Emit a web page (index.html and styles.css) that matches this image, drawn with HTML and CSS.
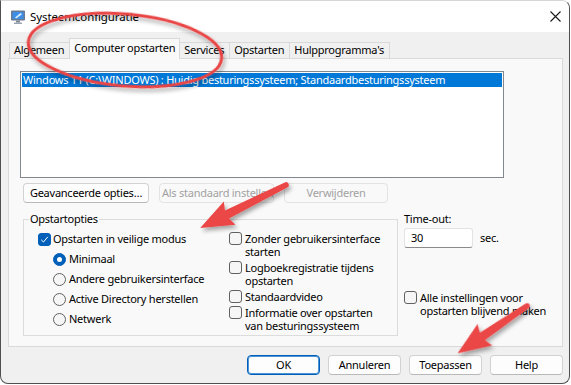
FILE: index.html
```html
<!DOCTYPE html>
<html lang="nl">
<head>
    <meta charset="UTF-8">
    <title>Systeemconfiguratie</title>
    <link rel="stylesheet" href="styles.css">
</head>
<body>
    <div class="window">
        <div class="titlebar">
            <svg class="app-icon" width="16" height="16" viewBox="0 0 16 16">
                <rect x="1" y="1.5" width="14" height="10" rx="1" fill="#6b7a90"/>
                <rect x="2.5" y="3" width="11" height="7" fill="#3d8ee6"/>
                <path d="M5 8.5 L10.5 4 L12 5.2 L6.2 9.5Z" fill="#d9ecff"/>
                <rect x="6" y="11.5" width="4" height="2" fill="#7d8898"/>
                <rect x="4" y="13.5" width="8" height="1.5" rx="0.5" fill="#9aa3b0"/>
            </svg>
            <span class="title">Systeemconfiguratie</span>
            <svg class="close" width="11" height="11" viewBox="0 0 11 11">
                <path d="M0.5 0.5 L10.5 10.5 M10.5 0.5 L0.5 10.5" stroke="#1a1a1a" stroke-width="1.1"/>
            </svg>
        </div>

        <div class="client">
            <div class="tabs">
                <div class="tab">Algemeen</div>
                <div class="tab active">Computer opstarten</div>
                <div class="tab">Services</div>
                <div class="tab">Opstarten</div>
                <div class="tab">Hulpprogramma's</div>
            </div>

            <div class="panel">
                <div class="listbox">
                    <div class="item selected">Windows 11 (C:\WINDOWS) : Huidig besturingssysteem; Standaardbesturingssysteem</div>
                </div>

                <div class="btn-row">
                    <button class="btn btn-adv">Geavanceerde opties…</button>
                    <button class="btn btn-default" disabled>Als standaard instellen</button>
                    <button class="btn btn-remove" disabled>Verwijderen</button>
                </div>

                <div class="options">
                    <fieldset class="group">
                        <legend>Opstartopties</legend>
                        <div class="group-body">
                            <div class="col-left">
                                <div class="row"><span class="check on"><svg width="9" height="9" viewBox="0 0 9 9"><path d="M1.2 4.8 L3.5 7 L7.8 1.8" fill="none" stroke="#fff" stroke-width="1"/></svg></span>Opstarten in veilige modus</div>
                                <div class="row sub"><span class="radio on"></span>Minimaal</div>
                                <div class="row sub"><span class="radio"></span>Andere gebruikersinterface</div>
                                <div class="row sub"><span class="radio"></span>Active Directory herstellen</div>
                                <div class="row sub"><span class="radio"></span>Netwerk</div>
                            </div>
                            <div class="col-right">
                                <div class="opt"><span class="check"></span><span class="opt-text">Zonder gebruikersinterface starten</span></div>
                                <div class="opt"><span class="check"></span><span class="opt-text">Logboekregistratie tijdens opstarten</span></div>
                                <div class="opt"><span class="check"></span><span class="opt-text">Standaardvideo</span></div>
                                <div class="opt"><span class="check"></span><span class="opt-text">Informatie over opstarten van besturingssysteem</span></div>
                            </div>
                        </div>
                    </fieldset>

                    <div class="timeout">
                        <div class="label">Time-out:</div>
                        <div class="timeout-row">
                            <div class="input">30</div>
                            <span class="unit">sec.</span>
                        </div>
                        <div class="opt persist"><span class="check"></span><span class="opt-text">Alle instellingen voor opstarten blijvend maken</span></div>
                    </div>
                </div>
            </div>

            <div class="footer">
                <button class="btn btn-foot primary">OK</button>
                <button class="btn btn-foot">Annuleren</button>
                <button class="btn btn-foot">Toepassen</button>
                <button class="btn btn-foot">Help</button>
            </div>
        </div>

        <!-- markup annotations drawn over the dialog -->
        <svg class="marks" width="571" height="385" viewBox="0 0 571 385">
            <defs>
                <filter id="shadow" x="-20%" y="-20%" width="140%" height="140%">
                    <feDropShadow dx="2" dy="3" stdDeviation="2" flood-color="#000" flood-opacity="0.35"/>
                </filter>
            </defs>
            <ellipse cx="125" cy="50" rx="97" ry="36" transform="rotate(5 125 50)" fill="none" stroke="#e94444" stroke-width="3" filter="url(#shadow)"/>
            <g filter="url(#shadow)">
                <g transform="translate(286 185) rotate(153.4)">
                    <path d="M0,-2.8 L66,-4.5 L63,-13 L96,0 L63,13 L66,4.5 L0,2.8 A2.8,2.8 0 0 1 0,-2.8Z" fill="#eb4646"/>
                </g>
                <g transform="translate(527 306) rotate(145.7)">
                    <path d="M0,-2.8 L54,-4.5 L51,-13 L84,0 L51,13 L54,4.5 L0,2.8 A2.8,2.8 0 0 1 0,-2.8Z" fill="#eb4646"/>
                </g>
            </g>
        </svg>
    </div>
</body>
</html>
```

FILE: styles.css
```css
* {
    margin: 0;
    padding: 0;
    box-sizing: border-box;
}

body {
    font-family: "Noto Sans", sans-serif;
    font-size: 11px;
    letter-spacing: -0.25px;
    line-height: 14px;
    color: #000;
    background: #fff;
}

.window {
    position: relative;
    width: 570px;
    height: 384px;
    border: 1px solid #4f4f4f;
    border-top-color: #d6d6d6;
    border-radius: 0 8px 8px 8px;
    overflow: hidden;
    background: #f0f0f0;
    display: flex;
    flex-direction: column;
}

/* title bar */
.titlebar {
    height: 31px;
    background: #fff;
    display: flex;
    align-items: center;
    padding-left: 9px;
}

.title {
    margin-left: 4px;
    font-size: 11.5px;
    letter-spacing: -0.1px;
}

.close {
    margin-left: auto;
    margin-right: 8px;
}

/* client area */
.client {
    flex: 1;
    padding: 6px 6px 0 7px;
}

.tabs {
    display: flex;
    align-items: flex-end;
    height: 20px;
    padding-left: 1px;
}

.tab {
    height: 16px;
    padding: 0 5px 0 4px;
    border: 1px solid #d9d9d9;
    border-bottom: none;
    background: #f0f0f0;
    line-height: 14px;
    white-space: nowrap;
}

.tab + .tab {
    margin-left: -1px;
}

.tab.active {
    position: relative;
    z-index: 1;
    height: 21px;
    margin-bottom: -1px;
    padding: 0 4px;
    background: #f9f9f9;
    line-height: 18px;
}

.panel {
    height: 289px;
    border: 1px solid #d9d9d9;
    background: #f9f9f9;
    padding: 12px 0 0 11px;
}

.listbox {
    width: 484px;
    height: 107px;
    border: 1px solid #828790;
    background: #fff;
    padding: 1px 1px 0;
}

.item {
    height: 14px;
    line-height: 14px;
    padding-left: 1px;
    white-space: nowrap;
}

.item.selected {
    background: #0078d7;
    color: #fff;
}

/* buttons */
.btn {
    font: inherit;
    letter-spacing: inherit;
    height: 20px;
    border: 1px solid #d2d2d2;
    border-bottom-color: #b9b9b9;
    border-radius: 4px;
    background: #fdfdfd;
    color: #000;
    white-space: nowrap;
    overflow: hidden;
}

.btn:disabled {
    border-color: #e3e3e3;
    background: #f9f9f9;
    color: #a2a2a2;
}

.btn-row {
    display: flex;
    gap: 10px;
    margin-top: 5px;
    padding-left: 3px;
}

.btn-adv {
    width: 126px;
}

.btn-default {
    width: 115px;
    padding: 0 2px;
}

.btn-remove {
    width: 104px;
}

/* startup options */
.options {
    display: flex;
    margin-top: 9px;
    padding-left: 3px;
}

.group {
    width: 375px;
    height: 124px;
    border: 1px solid #dcdcdc;
    padding: 0;
}

.group legend {
    margin-left: 5px;
    padding: 0 1px;
    line-height: 14px;
}

.group-body {
    display: flex;
}

.col-left {
    width: 205px;
    padding: 3px 0 0 14px;
}

.row {
    display: flex;
    align-items: center;
    height: 20px;
    white-space: nowrap;
}

.row .check {
    margin-right: 2px;
}

.row.sub {
    padding-left: 15px;
}

.row .radio {
    margin-right: 3px;
}

.col-right {
    display: flex;
    flex-direction: column;
    gap: 3px;
    padding-top: 6px;
}

.opt {
    display: flex;
    align-items: flex-start;
    line-height: 13px;
}

.opt .check {
    margin-right: 3px;
}

.opt-text {
    max-width: 140px;
}

.check {
    flex: none;
    width: 13px;
    height: 13px;
    border: 1px solid #616161;
    border-radius: 3px;
    background: #f6f6f6;
    display: flex;
    align-items: center;
    justify-content: center;
}

.check.on {
    background: #005fb8;
    border-color: #005fb8;
}

.radio {
    flex: none;
    width: 13px;
    height: 13px;
    border: 1px solid #616161;
    border-radius: 50%;
    background: #f6f6f6;
    display: flex;
    align-items: center;
    justify-content: center;
}

.radio.on {
    background: #005fb8;
    border-color: #005fb8;
}

.radio.on::after {
    content: "";
    width: 5px;
    height: 5px;
    border-radius: 50%;
    background: #fff;
}

/* time-out column */
.timeout {
    margin-left: 6px;
}

.timeout-row {
    display: flex;
    align-items: center;
    margin-top: 2px;
}

.input {
    width: 69px;
    height: 20px;
    border: 1px solid #e3e3e3;
    border-bottom-color: #8a8a8a;
    border-radius: 3px;
    background: #fff;
    padding: 2px 0 0 6px;
}

.unit {
    margin-left: 7px;
}

.persist {
    margin-top: 43px;
}

.persist .opt-text {
    max-width: 138px;
}

/* dialog buttons */
.footer {
    display: flex;
    justify-content: flex-end;
    gap: 8px;
    margin-top: 8px;
}

.btn-foot {
    width: 73px;
}

.btn-foot.primary {
    border: 1px solid #005fb8;
    box-shadow: inset 0 0 0 1px #4d94d6;
}

.marks {
    position: absolute;
    top: -1px;
    left: -1px;
    pointer-events: none;
}
```
